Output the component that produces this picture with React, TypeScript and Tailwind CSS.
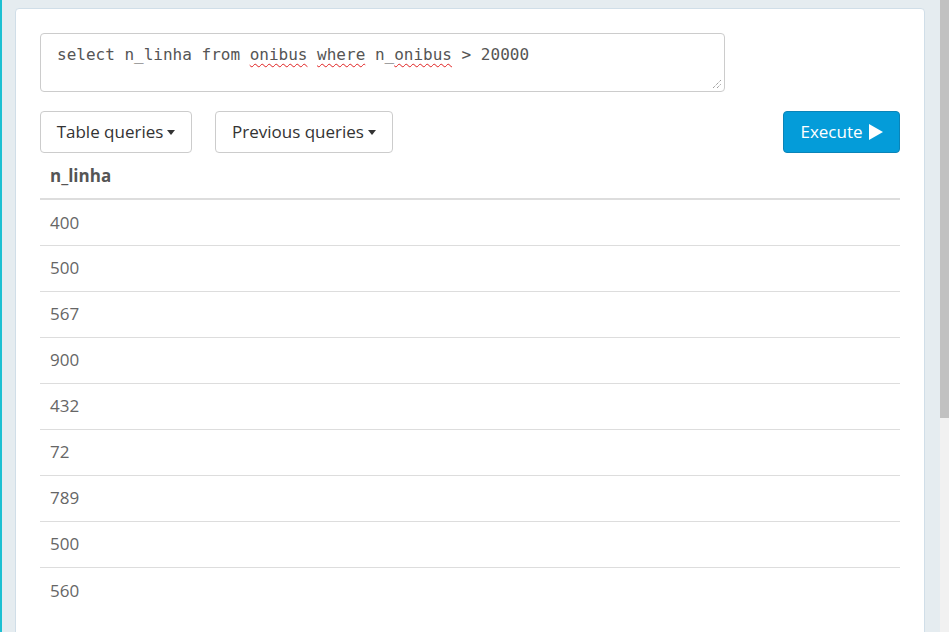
const rows = ['400', '500', '567', '900', '432', '72', '789', '500', '560'];

const sans = "font-['Open_Sans','Noto_Sans',sans-serif]";

function Caret() {
  return <span className="ml-1 inline-block h-0 w-0 border-x-[4px] border-t-[5px] border-x-transparent border-t-[#333] align-middle" />;
}

function Misspelled({ children }: { children: string }) {
  return <span className="underline decoration-[#e02020] decoration-wavy decoration-1 underline-offset-[3px]">{children}</span>;
}

function DropButton({ label, width }: { label: string; width: string }) {
  return (
    <button className={`flex h-[42px] ${width} items-center justify-center rounded border border-[#cccccc] bg-white text-[17px] text-[#333]`}>
      {label}
      <Caret />
    </button>
  );
}

export default function App() {
  return (
    <div className={`flex h-[632px] w-[949px] overflow-hidden bg-[#e5ecf0] ${sans}`}>
      <div className="w-[2px] shrink-0 bg-[#1cc0d2]" />
      <div className="flex-1 pl-[13px] pr-[13px] pt-[8px]">
        <div className="h-[640px] w-[910px] rounded border border-[#d0dee8] bg-white px-[24px] pt-[24px]">
          <div className="relative h-[59px] w-[685px] rounded border border-[#cccccc] px-[16px] pt-[10px] font-['DejaVu_Sans_Mono',monospace] text-[16px] leading-[22px] text-[#555]">
            select n_linha from <Misspelled>onibus</Misspelled> <Misspelled>where</Misspelled> n_<Misspelled>onibus</Misspelled> &gt; 20000
            <svg className="absolute bottom-[2px] right-[2px]" width="10" height="10" viewBox="0 0 10 10">
              <line x1="1" y1="9" x2="9" y2="1" stroke="#777" strokeWidth="1" strokeDasharray="1 1" />
              <line x1="5" y1="9" x2="9" y2="5" stroke="#777" strokeWidth="1" strokeDasharray="1 1" />
            </svg>
          </div>

          <div className="mt-[19px] flex items-center">
            <DropButton label="Table queries" width="w-[152px]" />
            <div className="ml-[23px]">
              <DropButton label="Previous queries" width="w-[178px]" />
            </div>
            <button className="ml-auto flex h-[42px] w-[117px] items-center justify-center gap-[6px] rounded border border-[#0a84b8] bg-[#049cd9] text-[17px] text-white">
              Execute
              <svg width="14" height="16" viewBox="0 0 14 16">
                <path d="M0 0 L14 8 L0 16 Z" fill="white" />
              </svg>
            </button>
          </div>

          <table className="w-[860px] border-collapse text-left text-[17px]">
            <thead>
              <tr className="border-b-2 border-[#dddddd]">
                <th className="h-[46px] px-[10px] pt-[1px] font-bold text-[#555]">n_linha</th>
              </tr>
            </thead>
            <tbody>
              {rows.map((r, i) => (
                <tr key={i} className="border-b border-[#dddddd] last:border-b-0">
                  <td className="h-[46px] px-[10px] text-[#666]">{r}</td>
                </tr>
              ))}
            </tbody>
          </table>
        </div>
      </div>
      <div className="flex w-[9px] shrink-0 flex-col bg-[#f1f1f1]">
        <div className="h-[418px] bg-[#c1c1c1]" />
      </div>
    </div>
  );
}
